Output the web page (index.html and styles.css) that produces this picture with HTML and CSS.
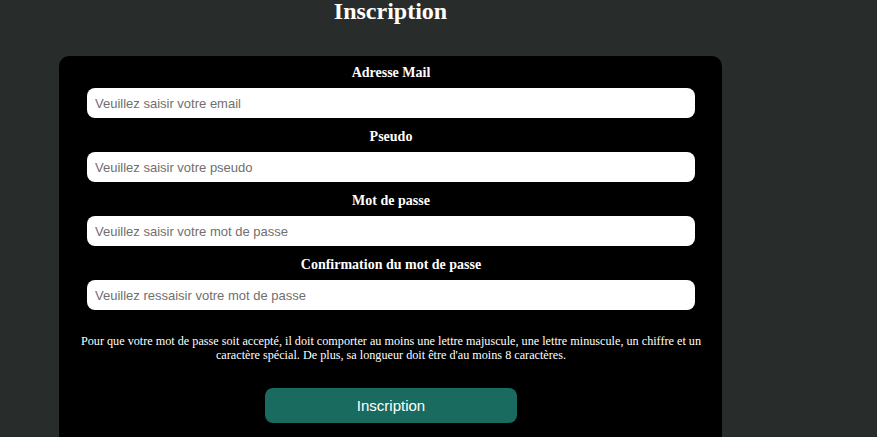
FILE: index.html
```html
<!DOCTYPE html>
<html lang="fr">
<head>
<meta charset="utf-8">
<title>Inscription</title>
<link rel="stylesheet" href="styles.css">
</head>
<body>
<main class="page">
  <h1 class="title">Inscription</h1>
  <form class="card">
    <label class="label" for="email">Adresse Mail</label>
    <input class="field" id="email" type="email" placeholder="Veuillez saisir votre email">
    <label class="label" for="pseudo">Pseudo</label>
    <input class="field" id="pseudo" type="text" placeholder="Veuillez saisir votre pseudo">
    <label class="label" for="pw">Mot de passe</label>
    <input class="field" id="pw" type="password" placeholder="Veuillez saisir votre mot de passe">
    <label class="label" for="pw2">Confirmation du mot de passe</label>
    <input class="field" id="pw2" type="password" placeholder="Veuillez ressaisir votre mot de passe">
    <p class="hint">Pour que votre mot de passe soit accepté, il doit comporter au moins une lettre majuscule, une lettre minuscule, un chiffre et un caractère spécial. De plus, sa longueur doit être d'au moins 8 caractères.</p>
    <button class="btn" type="button">Inscription</button>
  </form>
</main>
</body>
</html>
```
FILE: styles.css
```css
html, body {
  margin: 0;
  padding: 0;
  background: #282c2b;
  height: 100%;
  overflow: hidden;
}
.page {
  width: 663px;
  margin-left: 59px;
  display: flex;
  flex-direction: column;
  align-items: stretch;
}
.title {
  margin: 0;
  padding: 0;
  height: 56px;
  text-align: center;
  font-family: "Liberation Serif", serif;
  font-weight: bold;
  font-size: 24px;
  line-height: 22px;
  color: #ffffff;
}
.card {
  background: #000000;
  border-radius: 10px;
  padding: 9px 27px 24px 28px;
  display: flex;
  flex-direction: column;
  align-items: center;
  margin: 0;
}
.label {
  font-family: "Liberation Serif", serif;
  font-weight: bold;
  font-size: 14px;
  line-height: 16px;
  color: #ffffff;
  margin-bottom: 7px;
}
.field {
  box-sizing: border-box;
  width: 608px;
  height: 30px;
  border: none;
  border-radius: 8px;
  background: #ffffff;
  padding: 0 8px;
  font-family: "Liberation Sans", Arial, sans-serif;
  font-size: 13px;
  color: #333;
  margin: 0 0 11px 0;
  outline: none;
}
.field::placeholder {
  color: #6f6f6f;
}
.hint {
  margin: 13px -10px 0 -10px;
  text-align: center;
  font-family: "Liberation Serif", serif;
  font-size: 12.2px;
  line-height: 14px;
  color: #ffffff;
}
.btn {
  margin-top: 26px;
  width: 252px;
  height: 35px;
  border: none;
  border-radius: 8px;
  background: #186b5e;
  color: #ffffff;
  font-family: "Liberation Sans", Arial, sans-serif;
  font-size: 15px;
  cursor: pointer;
}
```
